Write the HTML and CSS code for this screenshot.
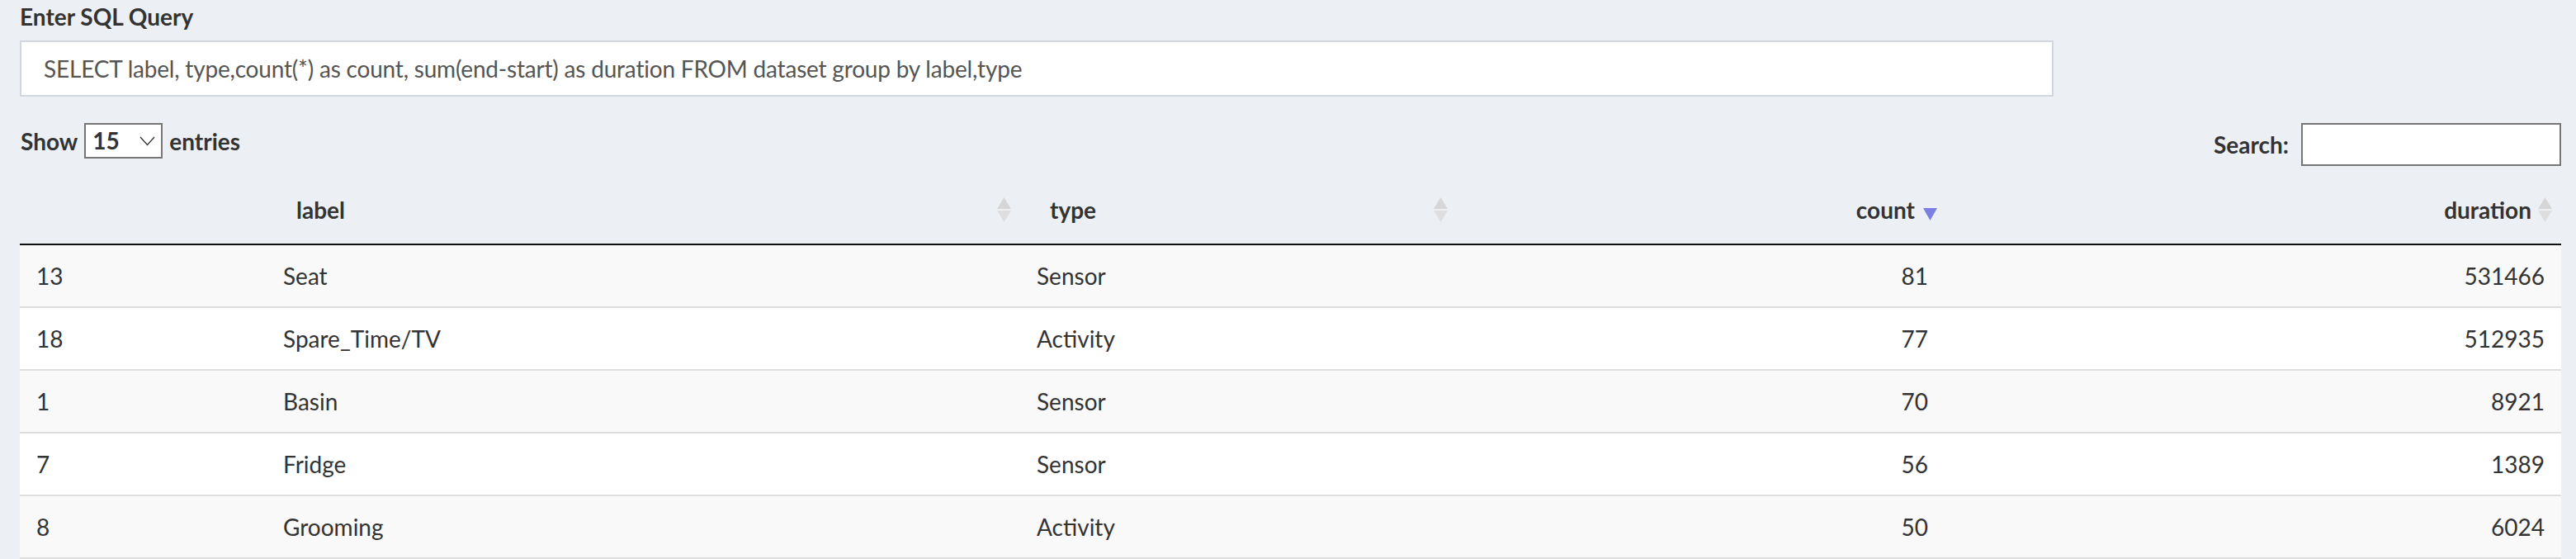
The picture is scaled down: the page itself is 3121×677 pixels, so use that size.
FILE: index.html
```html
<!DOCTYPE html>
<html lang="en">
<head>
<meta charset="utf-8">
<title>SQL Query</title>
<link rel="stylesheet" href="styles.css">
</head>
<body>
<div class="page">
  <label class="field-label" for="sql">Enter SQL Query</label>
  <div class="sql-input" id="sql">SELECT label, type,count(*) as count, sum(end-start) as duration FROM dataset group by label,type</div>

  <div class="controls">
    <div class="length">
      <span>Show</span>
      <div class="select">
        <span class="select-value">15</span>
        <svg class="chev" width="19" height="12" viewBox="0 0 19 12"><path d="M1 1 L9.5 10.5 L18 1" fill="none" stroke="#333" stroke-width="1.3"/></svg>
      </div>
      <span>entries</span>
    </div>
    <div class="search">
      <span>Search:</span>
      <div class="search-box"></div>
    </div>
  </div>

  <table class="grid">
    <colgroup>
      <col class="c1"><col class="c2"><col class="c3"><col class="c4"><col class="c5">
    </colgroup>
    <thead>
      <tr>
        <th></th>
        <th class="sortable">label<svg class="sort" width="17" height="30" viewBox="0 0 17 30"><path d="M8.5 0 L17 14 L0 14 Z" fill="#d6d6d6"/><path d="M0 16 L17 16 L8.5 30 Z" fill="#dedede"/></svg></th>
        <th class="sortable">type<svg class="sort" width="17" height="30" viewBox="0 0 17 30"><path d="M8.5 0 L17 14 L0 14 Z" fill="#d6d6d6"/><path d="M0 16 L17 16 L8.5 30 Z" fill="#dedede"/></svg></th>
        <th class="sortable num">count<svg class="sort desc" width="17" height="15" viewBox="0 0 17 15"><path d="M0 0 L17 0 L8.5 15 Z" fill="#7b7fe2"/></svg></th>
        <th class="sortable num">duration<svg class="sort" width="17" height="30" viewBox="0 0 17 30"><path d="M8.5 0 L17 14 L0 14 Z" fill="#d6d6d6"/><path d="M0 16 L17 16 L8.5 30 Z" fill="#dedede"/></svg></th>
      </tr>
    </thead>
    <tbody>
      <tr><td>13</td><td>Seat</td><td>Sensor</td><td class="num">81</td><td class="num">531466</td></tr>
      <tr><td>18</td><td>Spare_Time/TV</td><td>Activity</td><td class="num">77</td><td class="num">512935</td></tr>
      <tr><td>1</td><td>Basin</td><td>Sensor</td><td class="num">70</td><td class="num">8921</td></tr>
      <tr><td>7</td><td>Fridge</td><td>Sensor</td><td class="num">56</td><td class="num">1389</td></tr>
      <tr><td>8</td><td>Grooming</td><td>Activity</td><td class="num">50</td><td class="num">6024</td></tr>
    </tbody>
  </table>
</div>
</body>
</html>
```

FILE: styles.css
```css
html, body {
  margin: 0;
  padding: 0;
  background: #ecf0f5;
}

body {
  font-family: "Lato", "Liberation Sans", sans-serif;
  font-size: 28px;
  color: #333;
  overflow: hidden;
}

.page {
  padding: 0 18px 0 24px;
}

.field-label {
  display: block;
  font-weight: bold;
  line-height: 40px;
  height: 40px;
}

.sql-input {
  box-sizing: border-box;
  margin-top: 9px;
  width: 2464px;
  height: 68px;
  background: #fff;
  border: 2px solid #d2d6de;
  padding: 0 27px;
  line-height: 64px;
  color: #555;
  font-size: 28px;
  letter-spacing: -0.2px;
  white-space: nowrap;
  overflow: hidden;
}

.controls {
  margin-top: 32px;
  height: 52px;
  display: flex;
  justify-content: space-between;
  align-items: flex-start;
  font-weight: bold;
}

.length {
  display: flex;
  align-items: center;
  gap: 8px;
  height: 43px;
  padding-left: 1px;
}

.select {
  box-sizing: border-box;
  width: 95px;
  height: 43px;
  background: #fff;
  border: 2px solid #767676;
  display: flex;
  align-items: center;
  justify-content: space-between;
  padding: 0 7px 0 8px;
}

.select-value {
  line-height: 39px;
}

.chev {
  display: block;
  margin-top: 1px;
}

.search {
  display: flex;
  align-items: center;
  gap: 15px;
  height: 52px;
}

.search-box {
  box-sizing: border-box;
  width: 315px;
  height: 52px;
  background: #fff;
  border: 2px solid #767676;
}

.grid {
  margin-top: 12px;
  width: 3079px;
  table-layout: fixed;
  border-collapse: collapse;
  border-spacing: 0;
}

.c1 { width: 299px; }
.c2 { width: 913px; }
.c3 { width: 529px; }
.c4 { width: 591px; }
.c5 { width: 747px; }

.grid th {
  position: relative;
  font-weight: bold;
  text-align: left;
  padding: 20px 36px;
  line-height: 42px;
  border-bottom: 2px solid #111;
}

.grid th.num,
.grid td.num {
  text-align: right;
}

.sort {
  position: absolute;
  right: 11px;
  top: 50%;
  margin-top: -15px;
}

.sort.desc {
  margin-top: -2px;
  right: 9px;
}

.grid td {
  padding: 16px 20px;
  line-height: 42px;
  border-bottom: 2px solid #ddd;
  white-space: nowrap;
}

.grid tbody tr:nth-child(odd) td {
  background: #f9f9f9;
}

.grid tbody tr:nth-child(even) td {
  background: #fff;
}
```
